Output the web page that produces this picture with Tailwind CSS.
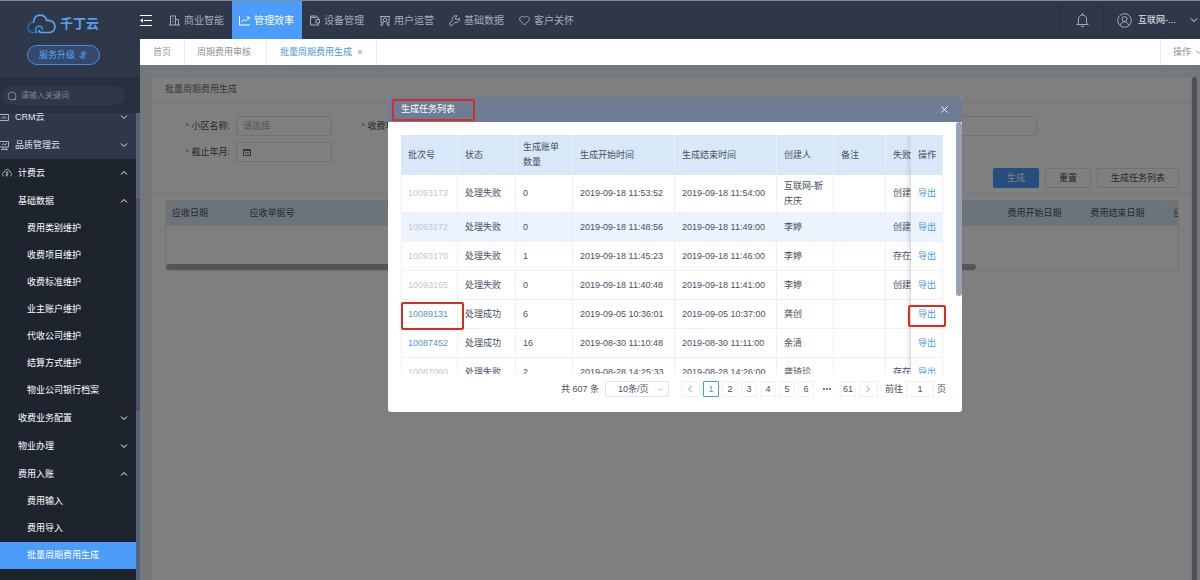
<!DOCTYPE html>
<html lang="zh-CN">
<head>
	<meta charset="UTF-8">
	<meta name="viewport" content="width=device-width, initial-scale=1.0">
	<title>批量周期费用生成</title>
	<script src="https://cdn.jsdelivr.net/npm/@tailwindcss/browser@4"></script>
</head>
<body class="flex h-screen overflow-hidden border-t border-[#838d99] bg-[#2f3849] font-['Liberation_Sans','Noto_Sans_CJK_SC',sans-serif] text-[9px] leading-[15px] text-[#48505f]">
	<svg class="hidden">
		<symbol id="down" viewBox="0 0 8 8"><path d="M1 2.500l3 3 3-3" fill="none" stroke="currentColor"/></symbol>
		<symbol id="up" viewBox="0 0 8 8"><path d="M1 5.500l3-3 3 3" fill="none" stroke="currentColor"/></symbol>
	</svg>

	<!-- Sidebar -->
	<aside class="flex w-[140px] shrink-0 flex-col text-white">
		<div class="flex h-[76px] shrink-0 flex-col items-center pt-3 pr-3.5">
			<div class="flex h-[22px] items-center gap-1">
				<svg class="h-5 w-[29px]" viewBox="0 0 29 20" fill="none" stroke-width="1.7" stroke-linecap="round">
					<path d="M9.500 18.500H6C3 18.500 1 16.500 1 13.500 1 10 3.500 8 7 8.300" stroke="#1c6ba3"/>
					<path d="M6.500 8C7 4 9.500 1.200 13 1.200c3.500 0 6 2.300 6.700 5.300 5-.8 8.300 2 8.300 6 0 3.500-2.500 6-6 6h-7.500c-1.500 0-2.500-.8-2.500-2" stroke="#5ba3f5"/>
					<path d="M9.500 18.500c-2-3-.3-6.300 2.700-6.300 2 0 3.400 1.300 3.300 3.300" stroke="#2b8fd0"/>
				</svg>
				<span class="text-[13px] font-bold leading-5 text-[#5ba0ee]">千丁云</span>
			</div>
			<button class="mt-2.5 flex h-5 w-[73px] items-center justify-center gap-1 rounded-full border border-[#4a8be0] bg-[#34496b] text-[#5ea5f8]">
				服务升级
				<svg class="h-2 w-2" viewBox="0 0 8 8" fill="none" stroke="currentColor"><path d="M3 .5v7L.5 5M5 7.500v-7L7.500 3"/></svg>
			</button>
		</div>
		<div class="z-10 h-9 shrink-0 bg-[#282f3f] pt-[9px] pl-0.5">
			<label class="flex h-[19px] w-[123px] items-center gap-1 rounded-full bg-[#2f3849] pl-[5px] text-[#7e8796]">
				<svg class="h-[10px] w-[10px]" viewBox="0 0 10 10" fill="none" stroke="currentColor"><circle cx="5" cy="5" r="4"/><path d="M7 8.500h2"/></svg>
				<input type="text" aria-label="搜索" placeholder="请输入关键词" class="w-24 text-[8px] leading-3 placeholder:text-[#7e8796]">
			</label>
		</div>
		<div class="relative min-h-0 flex-1 overflow-hidden bg-[#55637d] pr-1">
			<div class="absolute top-[86px] right-0 h-[212px] w-1 bg-[#4a5264]"></div>
			<nav class="-mt-2.5 min-h-full bg-[#1e242e] pb-8">
				<div class="bg-[#2f3849] text-[#dfe3ea]">
					<a href="#" class="flex h-7 items-center pr-2">
						<svg class="mr-1.5 h-[10px] w-[9px]" viewBox="0 0 9 10" fill="none" stroke="#a9b1be"><path d="M0 2.500h8.500v6H0M2 6.500V5M4 6.500V4M6 6.500V5"/></svg>
						<span class="flex-1">CRM云</span>
						<svg class="h-2 w-2"><use href="#down"/></svg>
					</a>
					<a href="#" class="flex h-7 items-center pr-2">
						<svg class="mr-1.5 h-[10px] w-[9px]" viewBox="0 0 9 10" fill="none" stroke="#a9b1be"><path d="M0 1.500h8.500v5.500H0M2 5l1.500-1.500L5 5l2-2M3 7v2.500M6 7v2.500M1 9.500h7"/></svg>
						<span class="flex-1">品质管理云</span>
						<svg class="h-2 w-2"><use href="#down"/></svg>
					</a>
				</div>
				<a href="#" class="flex h-7 items-center pr-2">
					<svg class="mr-1.5 ml-0.5 h-[10px] w-[10px]" viewBox="0 0 10 10" fill="none" stroke="#a9b1be"><path d="M2 8.500C-.5 7 .5 4 2.500 4 3 .5 7.500.5 8 4c2 .5 2 3.500 0 4.500M6.500 4.500c-1-1-3 0-2 1l1 .5c1 1-1 2-2 1M5 3.500v5"/></svg>
					<span class="flex-1">计费云</span>
					<svg class="h-2 w-2"><use href="#up"/></svg>
				</a>
				<a href="#" class="flex h-7 items-center justify-between pr-2 pl-[18px]">基础数据 <svg class="h-2 w-2"><use href="#up"/></svg></a>
				<a href="#" class="block pl-[27px] leading-[27px]">费用类别维护</a>
				<a href="#" class="block pl-[27px] leading-[27px]">收费项目维护</a>
				<a href="#" class="block pl-[27px] leading-[27px]">收费标准维护</a>
				<a href="#" class="block pl-[27px] leading-[27px]">业主账户维护</a>
				<a href="#" class="block pl-[27px] leading-[27px]">代收公司维护</a>
				<a href="#" class="block pl-[27px] leading-[27px]">结算方式维护</a>
				<a href="#" class="block pl-[27px] leading-[27px]">物业公司银行档案</a>
				<a href="#" class="flex h-7 items-center justify-between pr-2 pl-[18px]">收费业务配置 <svg class="h-2 w-2"><use href="#down"/></svg></a>
				<a href="#" class="flex h-7 items-center justify-between pr-2 pl-[18px]">物业办理 <svg class="h-2 w-2"><use href="#down"/></svg></a>
				<a href="#" class="flex h-7 items-center justify-between pr-2 pl-[18px]">费用入账 <svg class="h-2 w-2"><use href="#up"/></svg></a>
				<a href="#" class="block pl-[27px] leading-[27px]">费用输入</a>
				<a href="#" class="block pl-[27px] leading-[27px]">费用导入</a>
				<a href="#" class="block bg-[#4c9df9] pl-[27px] leading-[27px]">批量周期费用生成</a>
			</nav>
		</div>
	</aside>

	<div class="flex min-w-0 flex-1 flex-col">
		<!-- Top bar -->
		<header class="flex h-[38px] shrink-0 items-center text-[10px] text-[#a4adbb]">
			<button aria-label="菜单" class="w-[22px] text-white">
				<svg class="h-3 w-3" viewBox="0 0 12 12" fill="none" stroke="currentColor"><path d="M0 1.500h12M4 6.500h8M0 11.500h12"/><path d="M0 6.500l3-2v4z" fill="currentColor" stroke="none"/></svg>
			</button>
			<nav class="flex h-full flex-1">
				<a href="#" class="flex w-[70px] items-center gap-1 pl-[7px]">
					<svg class="h-[11px] w-[11px]" viewBox="0 0 11 11" fill="none" stroke="currentColor"><path d="M1.500 10V1h5v9M6.500 4.500h3V10M0 10h11M4 3v1.500M4 6v1.500"/></svg>商业智能</a>
				<a href="#" class="flex w-[70px] items-center gap-1 bg-[#4c9df9] pl-[7px] text-white">
					<svg class="h-[11px] w-[11px]" viewBox="0 0 11 11" fill="none" stroke="currentColor"><path d="M.5 1v9H11M2.500 7L5 4.500 6.500 6l3.500-3.500M7.500 2H10v2.500"/></svg>管理效率</a>
				<a href="#" class="flex w-[70px] items-center gap-1 pl-[7px]">
					<svg class="ml-px h-[11px] w-[10px]" viewBox="0 0 10 11" fill="none" stroke="currentColor"><path d="M8.500 4V3L6.500 1H.5v9h8V8.500M.5 2.500h6M6 4.500h3.500v3.500H6z"/></svg>设备管理</a>
				<a href="#" class="flex w-[70px] items-center gap-1 pl-[7px]">
					<svg class="ml-px h-[11px] w-[10px]" viewBox="0 0 10 11" fill="none" stroke="currentColor"><path d="M3 8H1V1.500h8V8H7M0 1.500h10M3.500 6.500L2 10.500M6.500 6.500L8 10.500M0 10h3M7 10h3"/><circle cx="5" cy="4.800" r="1.800"/></svg>用户运营</a>
				<a href="#" class="flex w-[70px] items-center gap-1 pl-[7px]">
					<svg class="h-[11px] w-[11px]" viewBox="0 0 11 11" fill="none" stroke="currentColor"><path d="M3.500 5.500C2.500 2.500 5 .3 8 .8L6.500 3l.3 1.500 1.500.3L10.300 3C11 6 9 8 6 7.500L3 10.300C1.500 11 0 9.500.7 8z"/></svg>基础数据</a>
				<a href="#" class="flex w-[70px] items-center gap-1 pl-[7px]">
					<svg class="h-[11px] w-[11px]" viewBox="0 0 11 11" fill="none" stroke="currentColor"><path d="M5.500 10L1.300 5.800C-.8 3 2.800-.5 5.500 2.500 8.200-.5 11.800 3 9.700 5.800z"/></svg>客户关怀</a>
			</nav>
			<button aria-label="通知" class="flex h-full w-11 items-center justify-center border-x border-[#2a3242]">
				<svg class="h-[14px] w-[13px]" viewBox="0 0 13 14" fill="none" stroke="currentColor"><path d="M.5 11.500h12M2 11c.6-1 .5-3 .5-5 0-2.500 1.800-4 4-4s4 1.500 4 4c0 2 0 4 .5 5M6.500 0v2M5 13.500h3"/></svg>
			</button>
			<button class="flex h-full w-24 items-center gap-1.5 pl-[13px] text-[9px] text-[#e3e7ed]">
				<svg class="h-[15px] w-[15px]" viewBox="0 0 15 15" fill="none" stroke="#a4adbb"><circle cx="7.500" cy="7.500" r="6.800"/><circle cx="7.500" cy="6" r="2.500"/><path d="M3.500 12.500c.4-5 7.600-5 8 0"/></svg>
				<span class="flex-1 text-left">互联网-...</span>
				<svg class="mr-0.5 h-2 w-2"><use href="#down"/></svg>
			</button>
		</header>

		<!-- Page tabs -->
		<div class="flex h-[26px] shrink-0 bg-white leading-[26px] text-[#8b929c]">
			<a href="#" class="border-r border-[#eceef1] px-[13px]">首页</a>
			<a href="#" class="border-r border-[#eceef1] pr-[15px] pl-3">周期费用审核</a>
			<a href="#" class="flex items-center gap-[5px] border-r border-[#eceef1] px-[13px] text-[#479bdc]">批量周期费用生成
				<svg class="h-[6px] w-[6px]" viewBox="0 0 6 6" stroke="#8aa9c4"><path d="M1 1l4 4M5 1L1 5"/></svg>
			</a>
			<button class="ml-auto flex w-10 items-center gap-1 overflow-hidden border-l border-[#eceef1] pl-3">
				<span class="shrink-0">操作</span> <svg class="h-2 w-2 shrink-0"><use href="#down"/></svg>
			</button>
		</div>

		<!-- Page content -->
		<main class="relative min-h-0 flex-1 bg-[#eaf1f6] pt-3 pl-3">
			<div class="flex h-full">
				<section class="min-w-0 flex-1 bg-white">
					<h1 class="border-b border-[#e9ebee] pl-[13px] leading-[25px] text-[#6a7180]">批量周期费用生成</h1>
					<form class="pt-[13px]">
						<div class="flex pl-1">
							<div class="flex w-44 items-center gap-1.5">
								<label for="community" class="flex-1 text-right"><span class="text-[#f56c6c]">*</span> 小区名称:</label>
								<input id="community" type="text" placeholder="请选择" class="h-5 w-24 rounded-[2px] border border-[#dfe2e8] px-1.5 placeholder:text-[#a5aab3]">
							</div>
							<div class="flex w-44 items-center gap-1.5">
								<label for="item" class="flex-1 text-right"><span class="text-[#f56c6c]">*</span> 收费项目:</label>
								<input id="item" type="text" class="h-5 w-24 rounded-[2px] border border-[#dfe2e8] px-1.5">
							</div>
							<input type="text" aria-label="收费标准" class="mr-[154px] ml-auto h-5 w-24 rounded-[2px] border border-[#dfe2e8] px-1.5">
						</div>
						<div class="mt-1.5 flex pl-1">
							<div class="flex w-44 items-center gap-1.5">
								<label for="month" class="flex-1 text-right"><span class="text-[#f56c6c]">*</span> 截止年月:</label>
								<div class="flex h-5 w-24 items-center rounded-[2px] border border-[#dfe2e8] px-1.5">
									<svg class="h-2 w-2 shrink-0" viewBox="0 0 8 8" fill="none" stroke="#6a7180"><path d="M.5 1.500h7v6h-7zM0 2.500h8M2 5h4"/></svg>
									<input id="month" type="text" class="w-full">
								</div>
							</div>
						</div>
						<div class="mt-1.5 flex justify-end gap-1.5 border-b border-[#e9ebee] pr-3 pb-[5px]">
							<button type="button" class="h-5 w-[46px] rounded-[2px] bg-[#4c9df9] text-white">生成</button>
							<button type="button" class="h-5 w-[46px] rounded-[2px] border border-[#dfe2e8]">重置</button>
							<button type="button" class="h-5 w-[82px] rounded-[2px] border border-[#dfe2e8]">生成任务列表</button>
						</div>
					</form>
					<div class="mt-1.5 mr-3 ml-[13px] h-[71px] overflow-hidden border border-[#e6eaf0]">
						<table class="w-full min-w-[1084px] table-fixed text-left">
							<colgroup><col class="w-[77px]"><col><col class="w-[83px]"><col class="w-[83px]"><col class="w-[83px]"></colgroup>
							<thead class="bg-[#d9e8f5]">
								<tr class="h-[25px]">
									<th class="border-r border-[#e0edf8] pl-1.5 font-normal">应收日期</th>
									<th class="border-r border-[#e0edf8] pl-1.5 font-normal">应收单据号</th>
									<th class="border-r border-[#e0edf8] pl-1.5 font-normal">费用开始日期</th>
									<th class="border-r border-[#e0edf8] pl-1.5 font-normal">费用结束日期</th>
									<th class="pl-1.5 font-normal">应</th>
								</tr>
							</thead>
						</table>
						<div class="mt-[38px] h-1.5 w-4/5 rounded-full bg-[#a8aab6]"></div>
					</div>
				</section>
				<div class="mr-[3px] ml-px w-[5px] rounded-t-full bg-[#9ea1b0]"></div>
			</div>

			<!-- Dialog -->
			<div class="absolute inset-0 z-20 flex items-start justify-center bg-black/50 pt-8 pl-[10px]">
				<div role="dialog" aria-labelledby="dialogTitle" class="relative w-[574px] rounded-[3px] bg-white">
					<div class="flex h-[25px] items-center justify-between rounded-t-[3px] bg-[#6e7d96] pr-3.5 pl-[13px] text-white">
						<h2 id="dialogTitle">生成任务列表</h2>
						<button aria-label="关闭"><svg class="h-[7px] w-[7px]" viewBox="0 0 7 7" stroke="currentColor"><path d="M.5.500l6 6M6.500.500l-6 6"/></svg></button>
					</div>
					<div class="relative mt-[13px] mr-[19px] ml-[13px] h-[239px] overflow-hidden">
						<table class="w-full table-fixed border-separate border-spacing-0 text-left [&_td]:border-r [&_td]:border-b [&_td]:border-[#edf0f4] [&_td]:pl-[7px] [&_td:first-child]:border-l [&_td:first-child]:pl-1.5 [&_th]:border-r [&_th]:border-[#e6f0fa] [&_th]:pl-[7px] [&_th]:font-normal">
							<colgroup><col class="w-[57px]"><col class="w-[58px]"><col class="w-[57px]"><col class="w-[102px]"><col class="w-[102px]"><col class="w-[57px]"><col class="w-[52px]"><col class="w-[25px]"><col class="w-8"></colgroup>
							<thead class="bg-[#d9e8f8]">
								<tr class="h-10">
									<th>批次号</th>
									<th>状态</th>
									<th class="pr-2">生成账单数量</th>
									<th>生成开始时间</th>
									<th>生成结束时间</th>
									<th>创建人</th>
									<th>备注</th>
									<th class="whitespace-nowrap">失败</th>
									<th>操作</th>
								</tr>
							</thead>
							<tbody>
								<tr class="h-[38px]">
									<td class="text-[#c3c8d0]">10093173</td><td>处理失败</td><td>0</td>
									<td>2019-09-18 11:53:52</td><td>2019-09-18 11:54:00</td>
									<td class="pr-2">互联网-靳庆庆</td><td></td><td class="whitespace-nowrap">创建</td>
									<td><a href="#" class="text-[#479bdc]">导出</a></td>
								</tr>
								<tr class="h-[29px] bg-[#eaf3fe]">
									<td class="text-[#c3c8d0]">10093172</td><td>处理失败</td><td>0</td>
									<td>2019-09-18 11:48:56</td><td>2019-09-18 11:49:00</td>
									<td>李婷</td><td></td><td class="whitespace-nowrap">创建</td>
									<td><a href="#" class="text-[#479bdc]">导出</a></td>
								</tr>
								<tr class="h-[29px]">
									<td class="text-[#c3c8d0]">10093170</td><td>处理失败</td><td>1</td>
									<td>2019-09-18 11:45:23</td><td>2019-09-18 11:46:00</td>
									<td>李婷</td><td></td><td class="whitespace-nowrap">存在</td>
									<td><a href="#" class="text-[#479bdc]">导出</a></td>
								</tr>
								<tr class="h-[29px]">
									<td class="text-[#c3c8d0]">10093165</td><td>处理失败</td><td>0</td>
									<td>2019-09-18 11:40:48</td><td>2019-09-18 11:41:00</td>
									<td>李婷</td><td></td><td class="whitespace-nowrap">创建</td>
									<td><a href="#" class="text-[#479bdc]">导出</a></td>
								</tr>
								<tr class="h-[29px]">
									<td><a href="#" class="text-[#5b93d3]">10089131</a></td><td>处理成功</td><td>6</td>
									<td>2019-09-05 10:36:01</td><td>2019-09-05 10:37:00</td>
									<td>龚创</td><td></td><td></td>
									<td><a href="#" class="text-[#479bdc]">导出</a></td>
								</tr>
								<tr class="h-[29px]">
									<td><a href="#" class="text-[#5b93d3]">10087452</a></td><td>处理成功</td><td>16</td>
									<td>2019-08-30 11:10:48</td><td>2019-08-30 11:11:00</td>
									<td>余清</td><td></td><td></td>
									<td><a href="#" class="text-[#479bdc]">导出</a></td>
								</tr>
								<tr class="h-[29px]">
									<td class="text-[#c3c8d0]">10087060</td><td>处理失败</td><td>2</td>
									<td>2019-08-28 14:25:33</td><td>2019-08-28 14:26:00</td>
									<td>龚琦珍</td><td></td><td class="whitespace-nowrap">存在</td>
									<td><a href="#" class="text-[#479bdc]">导出</a></td>
								</tr>
							</tbody>
						</table>
						<!-- shadow of the fixed column -->
						<div class="absolute inset-y-0 right-8 w-1.5 bg-linear-to-r from-black/0 to-black/10"></div>
					</div>
					<div class="flex items-center justify-end gap-[3px] pt-[7px] pr-4 pb-[15px]">
						<span class="mr-[3px]">共 607 条</span>
						<div class="relative mr-[9px]">
							<select aria-label="每页条数" class="h-4 w-16 appearance-none rounded-[2px] border border-[#e1e5ea] pl-3 leading-3">
								<option>10条/页</option>
							</select>
							<svg class="absolute top-1.5 right-1.5 h-[5px] w-[5px] text-[#8b929c]"><use href="#down"/></svg>
						</div>
						<button aria-label="上一页" class="flex h-4 w-[19px] items-center justify-center border border-[#f0f2f5]"><svg class="h-2 w-2 rotate-90 text-[#8b929c]"><use href="#down"/></svg></button>
						<button class="h-4 w-4 rounded-[1px] border border-[#479bdc] leading-[14px] text-[#479bdc]">1</button>
						<button class="h-4 w-4 border border-[#f0f2f5] leading-[14px]">2</button>
						<button class="h-4 w-4 border border-[#f0f2f5] leading-[14px]">3</button>
						<button class="h-4 w-4 border border-[#f0f2f5] leading-[14px]">4</button>
						<button class="h-4 w-4 border border-[#f0f2f5] leading-[14px]">5</button>
						<button class="h-4 w-4 border border-[#f0f2f5] leading-[14px]">6</button>
						<svg class="mx-0.5 h-2 w-4" viewBox="0 0 16 8" fill="currentColor"><circle cx="5" cy="4" r="1"/><circle cx="8" cy="4" r="1"/><circle cx="11" cy="4" r="1"/></svg>
						<button class="h-4 w-4 border border-[#f0f2f5] leading-[14px]">61</button>
						<button aria-label="下一页" class="flex h-4 w-[19px] items-center justify-center border border-[#f0f2f5]"><svg class="h-2 w-2 -rotate-90 text-[#8b929c]"><use href="#down"/></svg></button>
						<label for="jump" class="ml-1">前往</label>
						<input id="jump" type="text" value="1" class="h-4 w-7 border border-[#f0f2f5] text-center">
						<span>页</span>
					</div>

					<!-- scrollbar and highlight boxes -->
					<div class="absolute top-[25px] right-0 h-[174px] w-1.5 rounded-full bg-[#97a3b2]"></div>
					<div class="absolute top-0.5 left-1 h-[22px] w-[83px] rounded-[2px] border-2 border-[#d92c27]"></div>
					<div class="absolute top-[205px] left-[13px] h-7 w-[63px] rounded-[2px] border-2 border-[#d92c27]"></div>
					<div class="absolute top-[208px] left-[520px] h-[22px] w-[38px] rounded-[2px] border-2 border-[#d92c27]"></div>
				</div>
			</div>
		</main>
	</div>
</body>
</html>
